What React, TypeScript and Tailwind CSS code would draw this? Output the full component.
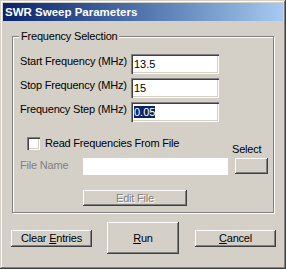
import React from 'react';

const raised = 'shadow-[inset_-1px_-1px_0_#404040,inset_1px_1px_0_#ffffff,inset_-2px_-2px_0_#808080]';
const sunken = 'shadow-[inset_1px_1px_0_#808080,inset_2px_2px_0_#404040,inset_-1px_-1px_0_#ffffff,inset_-2px_-2px_0_#d4d0c8]';

function Field({ label, value, selected }: { label: string; value: string; selected?: boolean }) {
  return (
    <>
      <div className="h-[20px] pt-[1px] leading-[13px] whitespace-nowrap">{label}</div>
      <div className={`h-[20px] bg-white pl-[3px] pt-[4px] leading-[13px] text-black tracking-normal ${sunken}`}>
        {selected ? <span className="bg-[#0a246a] text-white">{value}</span> : value}
      </div>
    </>
  );
}

function Btn({ children, className }: { children: React.ReactNode; className: string }) {
  return (
    <button className={`flex items-center justify-center bg-[#d4d0c8] leading-[13px] ${raised} ${className}`}>
      {children}
    </button>
  );
}

export default function App() {
  return (
    <div className="w-[286px] h-[269px] bg-[#d4d0c8] p-[3px] text-[11px] tracking-[-0.2px] text-black font-['Liberation_Sans',Arial,sans-serif] shadow-[inset_-1px_-1px_0_#404040,inset_1px_1px_0_#d4d0c8,inset_-2px_-2px_0_#808080,inset_2px_2px_0_#ffffff]">
      {/* title bar */}
      <div className="h-[18px] flex items-center pl-[2px] bg-linear-to-r from-[#0a246a] to-[#a6caf0] text-white font-bold text-[11.5px] tracking-normal leading-[18px]">
        SWR Sweep Parameters
      </div>

      {/* group box */}
      <div className="ml-[9px] mt-[15px] w-[262px] border border-[#808080] shadow-[1px_1px_0_#ffffff,inset_1px_1px_0_#ffffff] pb-[6px]">
        <span className="block w-fit -mt-[8px] ml-[6px] px-[2px] bg-[#d4d0c8] leading-[14px]">Frequency Selection</span>

        <div className="mt-[11px] pl-[7px] grid grid-cols-[111px_88px] gap-y-[4px]">
          <Field label="Start Frequency (MHz)" value="13.5" />
          <Field label="Stop Frequency (MHz)" value="15" />
          <Field label="Frequency Step (MHz)" value="0.05" selected />
        </div>

        <div className="mt-[15px] pl-[7px] flex">
          <div className="flex flex-col">
            <div className="h-[13px] flex items-center ml-[7px]">
              <div className={`w-[13px] h-[13px] bg-white ${sunken}`} />
              <span className="ml-[5px] leading-[13px] -mt-[1px]">Read Frequencies From File</span>
            </div>
            <div className="mt-[8px] flex items-start">
              <span className="w-[63px] pt-[1px] leading-[13px] text-[#808080]">File Name</span>
              <div className="w-[145px] h-[17px] bg-white" />
            </div>
          </div>
          <div className="ml-[7px] flex flex-col justify-end">
            <span className="-ml-[3px] mb-[2px] leading-[13px]">Select</span>
            <Btn className="w-[33px] h-[16px] mb-[1px]">{''}</Btn>
          </div>
        </div>

        <Btn className="mt-[15px] ml-[70px] w-[104px] h-[16px] text-[#808080] [text-shadow:1px_1px_0_#ffffff]">Edit File</Btn>
      </div>

      {/* bottom buttons */}
      <div className="mt-[9px] pl-[8px] flex items-center">
        <Btn className="w-[81px] h-[17px]">
          <span className="whitespace-pre">Clear <span className="underline underline-offset-1">E</span>ntries</span>
        </Btn>
        <Btn className="ml-[15px] w-[72px] h-[32px]">
          <span><span className="underline underline-offset-1">R</span>un</span>
        </Btn>
        <Btn className="ml-[16px] w-[81px] h-[17px]">
          <span><span className="underline underline-offset-1">C</span>ancel</span>
        </Btn>
      </div>
    </div>
  );
}
